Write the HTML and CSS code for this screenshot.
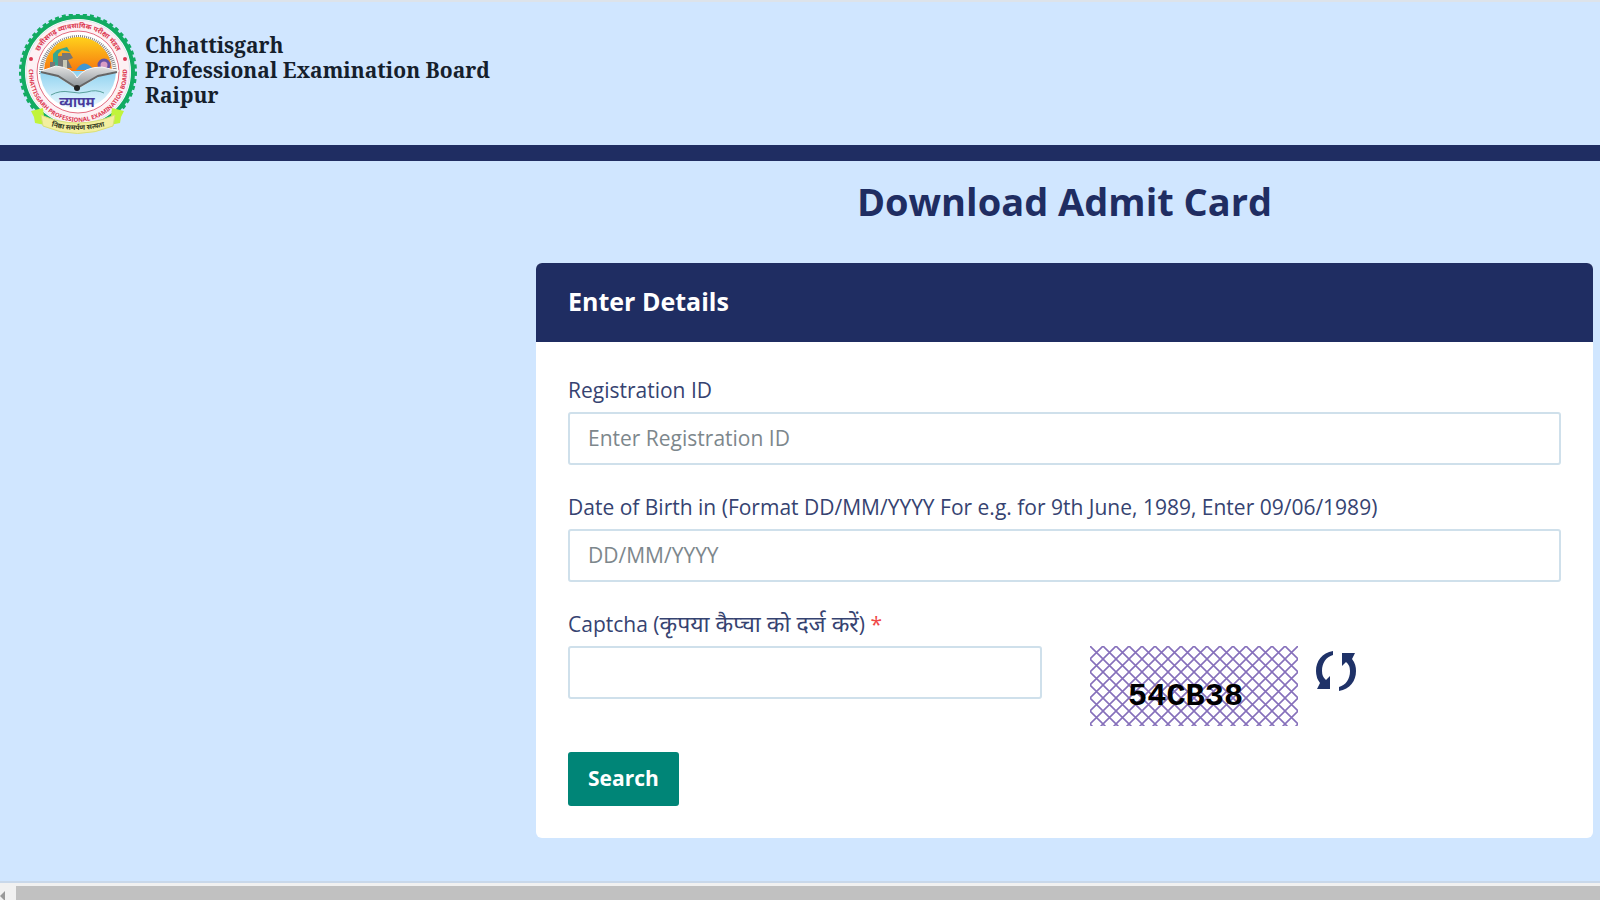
FILE: index.html
```html
<!DOCTYPE html>
<html lang="en">
<head>
<meta charset="utf-8">
<title>Download Admit Card</title>
<link rel="stylesheet" href="styles.css">
</head>
<body>
<header class="site-header">
  <svg class="emblem" viewBox="0 0 120 120" role="img" aria-label="Vyapam emblem">
    <defs>
      <linearGradient id="sky" x1="0" y1="0" x2="0" y2="1">
        <stop offset="0" stop-color="#ffd21c"/><stop offset="1" stop-color="#f6780e"/>
      </linearGradient>
      <linearGradient id="water" x1="0" y1="0" x2="0" y2="1">
        <stop offset="0" stop-color="#8fd2f0"/><stop offset="1" stop-color="#eefaff"/>
      </linearGradient>
      <linearGradient id="page" x1="0" y1="0" x2="0" y2="1">
        <stop offset="0" stop-color="#e4e4e4"/><stop offset="1" stop-color="#858c91"/>
      </linearGradient>
      <path id="arcTop" d="M17 58a44 44 0 0 1 88 0"/>
      <path id="arcBottom" d="M13 49A49 49 0 1 0 109 49"/>
      <path id="ribbonLine" d="M25 109Q60 123 97 109"/>
    </defs>
    <circle cx="61" cy="58" r="55" fill="#fff" stroke="#12ab62" stroke-width="4"/>
    <circle cx="61" cy="58" r="57" fill="none" stroke="#12ab62" stroke-width="4" stroke-dasharray="4 3"/>
    <circle cx="61" cy="58" r="52" fill="#fdf1f4" stroke="#dce8ef" stroke-width="1"/>
    <circle cx="61" cy="58" r="41" fill="#fff" stroke="#e36c80" stroke-width="1"/>
    <path d="M24 60a37 37 0 1 1 74 0" fill="none" stroke="#888" stroke-width="4" stroke-dasharray="1 1"/>
    <path d="M27 57a34 34 0 0 1 68 0z" fill="url(#sky)"/>
    <path d="M23 57h76a38 38 0 0 1-76 0z" fill="url(#water)"/>
    <path d="M36 54V40l4-4 10-3 3 5-8-2-4 4v14z" fill="#35a790"/>
    <path d="M41 54V42h4v-3h8l3 5-5 2 4 8zM33 54v-6h5v6z" fill="#777"/>
    <path d="M46 46h4v8h-4z" fill="#c9c9b6"/>
    <path d="M59 56q8-13 18 0z" fill="#3e97d4"/>
    <circle cx="87" cy="51" r="5" fill="#d89ec5" stroke="#6552a5" stroke-width="3"/>
    <path d="M24 57l15-5q17 2 21 12 7-11 25-11l17 4-18 4-24 14-20-13z" fill="url(#page)" stroke="#f7f7f7" stroke-width="1"/>
    <path d="M24 58l17 4 19 12 21-12 19-4" fill="none" stroke="#666" stroke-width="2"/>
    <circle cx="60" cy="74" r="3" fill="#222"/>
    <path d="M34 81q9-5 19-3t17 0q9-3 17 1" fill="none" stroke="#5aa09c"/>
    <text class="emblem-name" x="60" y="93">व्यापम</text>
    <text class="ring-text"><textPath href="#arcTop" startOffset="50%">छत्तीसगढ़ व्यावसायिक परीक्षा मंडल</textPath></text>
    <text class="ring-text ring-small"><textPath href="#arcBottom" startOffset="50%">CHHATTISGARH PROFESSIONAL EXAMINATION BOARD</textPath></text>
    <circle cx="14" cy="45" r="2" fill="#dc3851"/><circle cx="108" cy="45" r="2" fill="#dc3851"/>
    <path d="M14 97l12-3 2 17-10-2-1-6zM107 97l-12-3-2 17 10-2 1-6z" fill="#c1f43b"/>
    <path d="M24 101Q60 117 98 101l-2 11Q60 127 26 112z" fill="#f3efa0" stroke="#d9df77"/>
    <text class="motto"><textPath href="#ribbonLine" startOffset="50%">निष्ठा समर्पण सत्यता</textPath></text>
  </svg>
  <div class="board-name">Chhattisgarh<br>Professional Examination Board<br>Raipur</div>
</header>
<main class="content">
  <h1 class="page-title">Download Admit Card</h1>
  <section class="card">
    <h2 class="card-header">Enter Details</h2>
    <form class="card-body">
      <div class="field">
        <label for="registration">Registration ID</label>
        <input class="control" id="registration" type="text" placeholder="Enter Registration ID">
      </div>
      <div class="field">
        <label for="birth">Date of Birth in (Format DD/MM/YYYY For e.g. for 9th June, 1989, Enter 09/06/1989)</label>
        <input class="control" id="birth" type="text" placeholder="DD/MM/YYYY">
      </div>
      <div class="captcha-row">
        <div class="field">
          <label for="captcha">Captcha (<span class="hindi" lang="hi">कृपया कैप्चा को दर्ज करें</span>) <span class="required">*</span></label>
          <input class="control" id="captcha" type="text">
        </div>
        <svg class="captcha-image" viewBox="0 0 208 80" role="img" aria-label="Captcha">
          <defs>
            <pattern id="mesh" width="13" height="13" patternUnits="userSpaceOnUse">
              <path d="M-1-1l15 15M14-1L-1 14" stroke="#8670bb" stroke-width="1.6"/>
            </pattern>
          </defs>
          <rect width="208" height="80" fill="url(#mesh)"/>
          <text class="captcha-code" x="38" y="59">54CB38</text>
        </svg>
        <button class="refresh" type="button" aria-label="Refresh captcha">
          <svg viewBox="0 0 42 40">
            <path d="M18 0C7 2 1 10 1 20q0 7 4 12L2 38H15V25l-4 4Q7 26 7 20C7 12 11 6 18 4Z"/>
            <path d="M24 40C35 38 41 30 41 20q0-7-4-12L40 2H27V15l4-4Q35 14 35 20C35 28 31 34 24 36Z"/>
          </svg>
        </button>
      </div>
      <button class="search" type="submit">Search</button>
    </form>
  </section>
</main>
<div class="scroll-track">
  <svg class="scroll-arrow" viewBox="0 0 16 14"><path d="M0 10l5-5v10z" fill="#999"/></svg>
  <div class="scroll-thumb"></div>
</div>
</body>
</html>
```
FILE: styles.css
```css
* { box-sizing: border-box; }
body {
  margin: 0;
  min-height: 100vh;
  display: flex;
  flex-direction: column;
  background: #d0e6ff;
  color: #1f2d62;
  font-family: "Open Sans", "Noto Sans", sans-serif;
  font-size: 21px;
}
.site-header {
  display: flex;
  align-items: flex-start;
  gap: 8px;
  padding: 12px 17px 11px;
  border-top: 2px solid #dde3ea;
  border-bottom: 16px solid #1f2d62;
}
.emblem { width: 120px; height: 120px; }
.board-name {
  padding-top: 19px;
  color: #15202c;
  font-family: "Noto Serif", "DejaVu Serif", serif;
  font-size: 21px;
  font-weight: 700;
  line-height: 25px;
}
.emblem-name { fill: #493c9c; font: italic 700 14px "Noto Sans", sans-serif; text-anchor: middle; }
.ring-text { fill: #dc3851; font: 700 7px "Noto Sans", sans-serif; text-anchor: middle; }
.ring-small { font-size: 6px; }
.motto { fill: #343a22; font: 700 7px "Noto Sans", sans-serif; text-anchor: middle; }
.content { flex: 1; padding: 12px 7px 42px 33.5%; }
.page-title {
  margin: 0 0 34px;
  font-size: 38px;
  font-weight: 700;
  line-height: 56px;
  text-align: center;
}
.card { border-radius: 6px; background: #fff; overflow: hidden; }
.card-header {
  margin: 0;
  padding: 21px 32px 24px;
  background: #1f2d62;
  color: #fff;
  font-size: 25px;
  font-weight: 700;
  line-height: 34px;
}
.card-body { padding: 32px; }
.field { display: flex; flex-direction: column; gap: 6px; margin-bottom: 26px; }
.field label { color: #364371; line-height: 32px; }
.hindi { font-size: 23px; line-height: 1; }
.required { color: #f04848; }
.control {
  width: 100%;
  height: 53px;
  padding: 0 18px 1px;
  border: 2px solid #cfe0eb;
  border-radius: 3px;
  background: #fff;
  color: #364371;
  font: inherit;
}
.control::placeholder { color: #7d878c; opacity: 1; }
.captcha-row { display: flex; align-items: flex-start; }
.captcha-row .field { flex: 0 0 47.7%; margin: 0; }
.captcha-image { width: 208px; height: 80px; margin: 38px 17px 26px 48px; }
.captcha-code { fill: #000; font: 700 32px "Liberation Mono", monospace; }
.refresh { margin: 43px 0 0; padding: 0; border: 0; background: none; cursor: pointer; }
.refresh svg { display: block; width: 42px; height: 40px; fill: #1f3268; }
.search {
  display: block;
  height: 54px;
  padding: 0 20px 2px;
  border: 0;
  border-radius: 3px;
  background: #008577;
  color: #fff;
  font: inherit;
  font-weight: 700;
}
.scroll-track { display: flex; height: 19px; border-top: 2px solid #c9d8ea; background: #f1f1f1; padding-top: 3px; }
.scroll-arrow { width: 16px; height: 14px; }
.scroll-thumb { flex: 1; background: #c1c1c1; }
```
